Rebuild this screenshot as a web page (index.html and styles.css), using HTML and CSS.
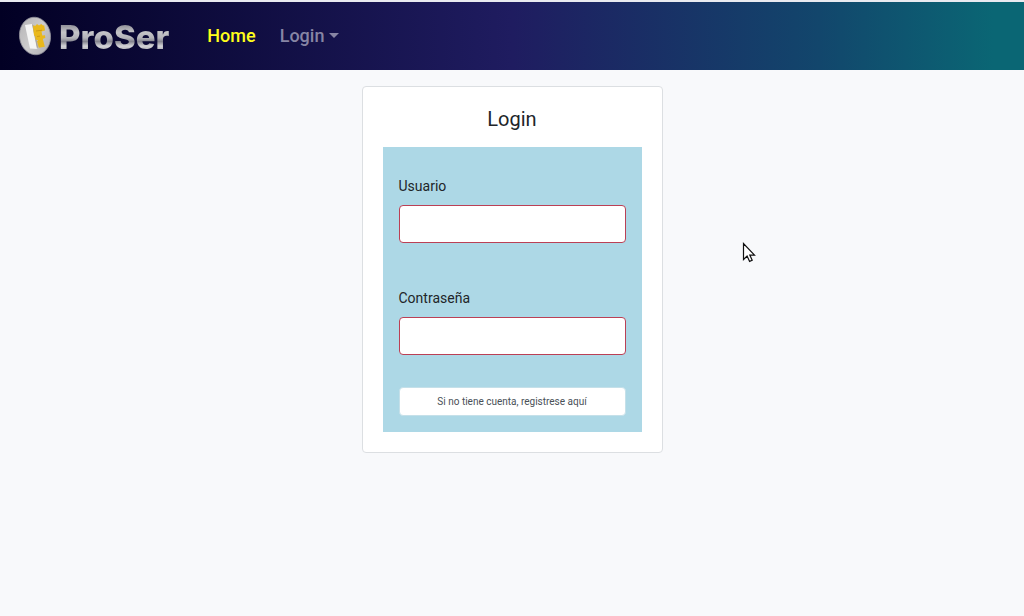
FILE: index.html
```html
<!DOCTYPE html>
<html lang="es">
<head>
<meta charset="utf-8">
<meta name="viewport" content="width=device-width, initial-scale=1">
<title>ProSer - Login</title>
<link rel="stylesheet" href="styles.css">
</head>
<body>
<header class="navbar">
  <a class="brand" href="#">
    <svg class="brand-mark" viewBox="0 0 34 40" aria-hidden="true">
      <defs>
        <linearGradient id="coin" x1="0" y1="0" x2="1" y2="1">
          <stop offset="0" stop-color="#b4b3b5"/>
          <stop offset=".5" stop-color="#cccbcc"/>
          <stop offset="1" stop-color="#acabaf"/>
        </linearGradient>
      </defs>
      <ellipse cx="17" cy="20" rx="15.5" ry="18.8" transform="rotate(-7 17 20)" fill="url(#coin)" stroke="#8f8e98" stroke-width=".8"/>
      <path d="M7 9l7-1 5.500 25-7.500-.5z" fill="#f5f5f5"/>
      <path d="M14 8l2 2 4 21-1 2z" fill="#aaa69f"/>
      <path d="M15 9.500l2.500.3 1.500-1.800 2 1.500 2.200-1.500 1.800 1.500 1.200-.3.800 5.300-3.500 1 .8 4 2.700-.2.300 2.800-2.500.7 2 8-6 1-1.800-6.500 1.200-1-2.700-.8-.3-3.500-1.200-.5z" fill="#e9b81c"/>
      <path d="M18 15l6-.8M19 20.500l3-.4" stroke="#c28c10" stroke-width=".7"/>
    </svg>
    <span class="brand-name">ProSer</span>
  </a>
  <nav class="nav">
    <a class="nav-link active" href="#">Home</a>
    <a class="nav-link dropdown" href="#">Login</a>
  </nav>
</header>
<main class="content">
  <section class="card">
    <h1 class="card-title">Login</h1>
    <form class="login-form">
      <div class="field">
        <label for="user">Usuario</label>
        <input class="text-input" id="user" type="text">
      </div>
      <div class="field">
        <label for="pass">Contraseña</label>
        <input class="text-input" id="pass" type="password">
      </div>
      <button class="register" type="button">Si no tiene cuenta, registrese aquí</button>
    </form>
  </section>
</main>
<svg class="pointer" viewBox="0 0 14 21" aria-hidden="true">
  <path d="M1.500 1.500v16l3.600-3.400 2.500 5.300 2.600-1.200-2.400-5.100h4.700z" fill="#fff" stroke="#111" stroke-width="1.200"/>
</svg>
</body>
</html>
```
FILE: styles.css
```css
* {
  box-sizing: border-box;
}

body {
  margin: 0;
  background: #f8f9fb;
  color: #212529;
  font: 14px/21px Roboto, sans-serif;
}

.navbar {
  display: flex;
  align-items: center;
  height: 70px;
  padding: 0 18px;
  border-top: 2px solid #e9eaf0;
  background: linear-gradient(90deg, #020024 0%, #1f1c60 50%, #12466c 80%, #0a6674 97%) padding-box;
}

.brand {
  display: flex;
  align-items: center;
  gap: 7px;
  text-decoration: none;
}

.brand-mark {
  width: 34px;
  height: 40px;
}

.brand-name {
  padding-top: 2px;
  background: linear-gradient(#85858d 22%, #c4c4c8 42%, #b4b4ba 54%, #84848e 62%, #d4d4d8 72%, #a0a0a8 84%);
  background-clip: text;
  color: transparent;
  font: 800 33px/44px Inter, sans-serif;
}

.nav {
  display: flex;
  gap: 24px;
  margin-left: 38px;
  padding-bottom: 2px;
  font-size: 18px;
  font-weight: 500;
  line-height: 27px;
}

.nav-link {
  color: #8785a4;
  text-decoration: none;
}

.nav-link.active {
  color: #ffff1a;
}

.dropdown {
  display: flex;
  align-items: center;
  gap: 5px;
}

.dropdown::after {
  border: 5px solid transparent;
  border-top-color: currentColor;
  border-bottom: 0;
  content: "";
}

.content {
  display: flex;
  justify-content: center;
  padding: 16px;
}

.card {
  width: 100%;
  max-width: 301px;
  padding: 20px;
  border: 1px solid #dcdfe2;
  border-radius: 4px;
  background: #fff;
}

.card-title {
  margin: 0 0 16px;
  font-size: 20px;
  font-weight: 400;
  line-height: 24px;
  text-align: center;
}

.login-form {
  display: flex;
  flex-direction: column;
  gap: 32px;
  padding: 29px 16px 16px;
  background: #add8e6;
}

.field {
  display: flex;
  flex-direction: column;
  gap: 8px;
  padding-bottom: 13px;
}

.field + .field {
  padding-bottom: 0;
}

.text-input {
  width: 100%;
  height: 38px;
  padding: 6px 12px;
  border: 1px solid #bb4055;
  border-radius: 4px;
  background: #fff;
  font: inherit;
}

.register {
  height: 29px;
  padding: 0 8px;
  border: 1px solid #c5e0e9;
  border-radius: 4px;
  background: #fff;
  color: #495057;
  font: 10px/15px Roboto, sans-serif;
}

.pointer {
  position: absolute;
  top: 242px;
  left: 742px;
  width: 14px;
  height: 21px;
}
```
